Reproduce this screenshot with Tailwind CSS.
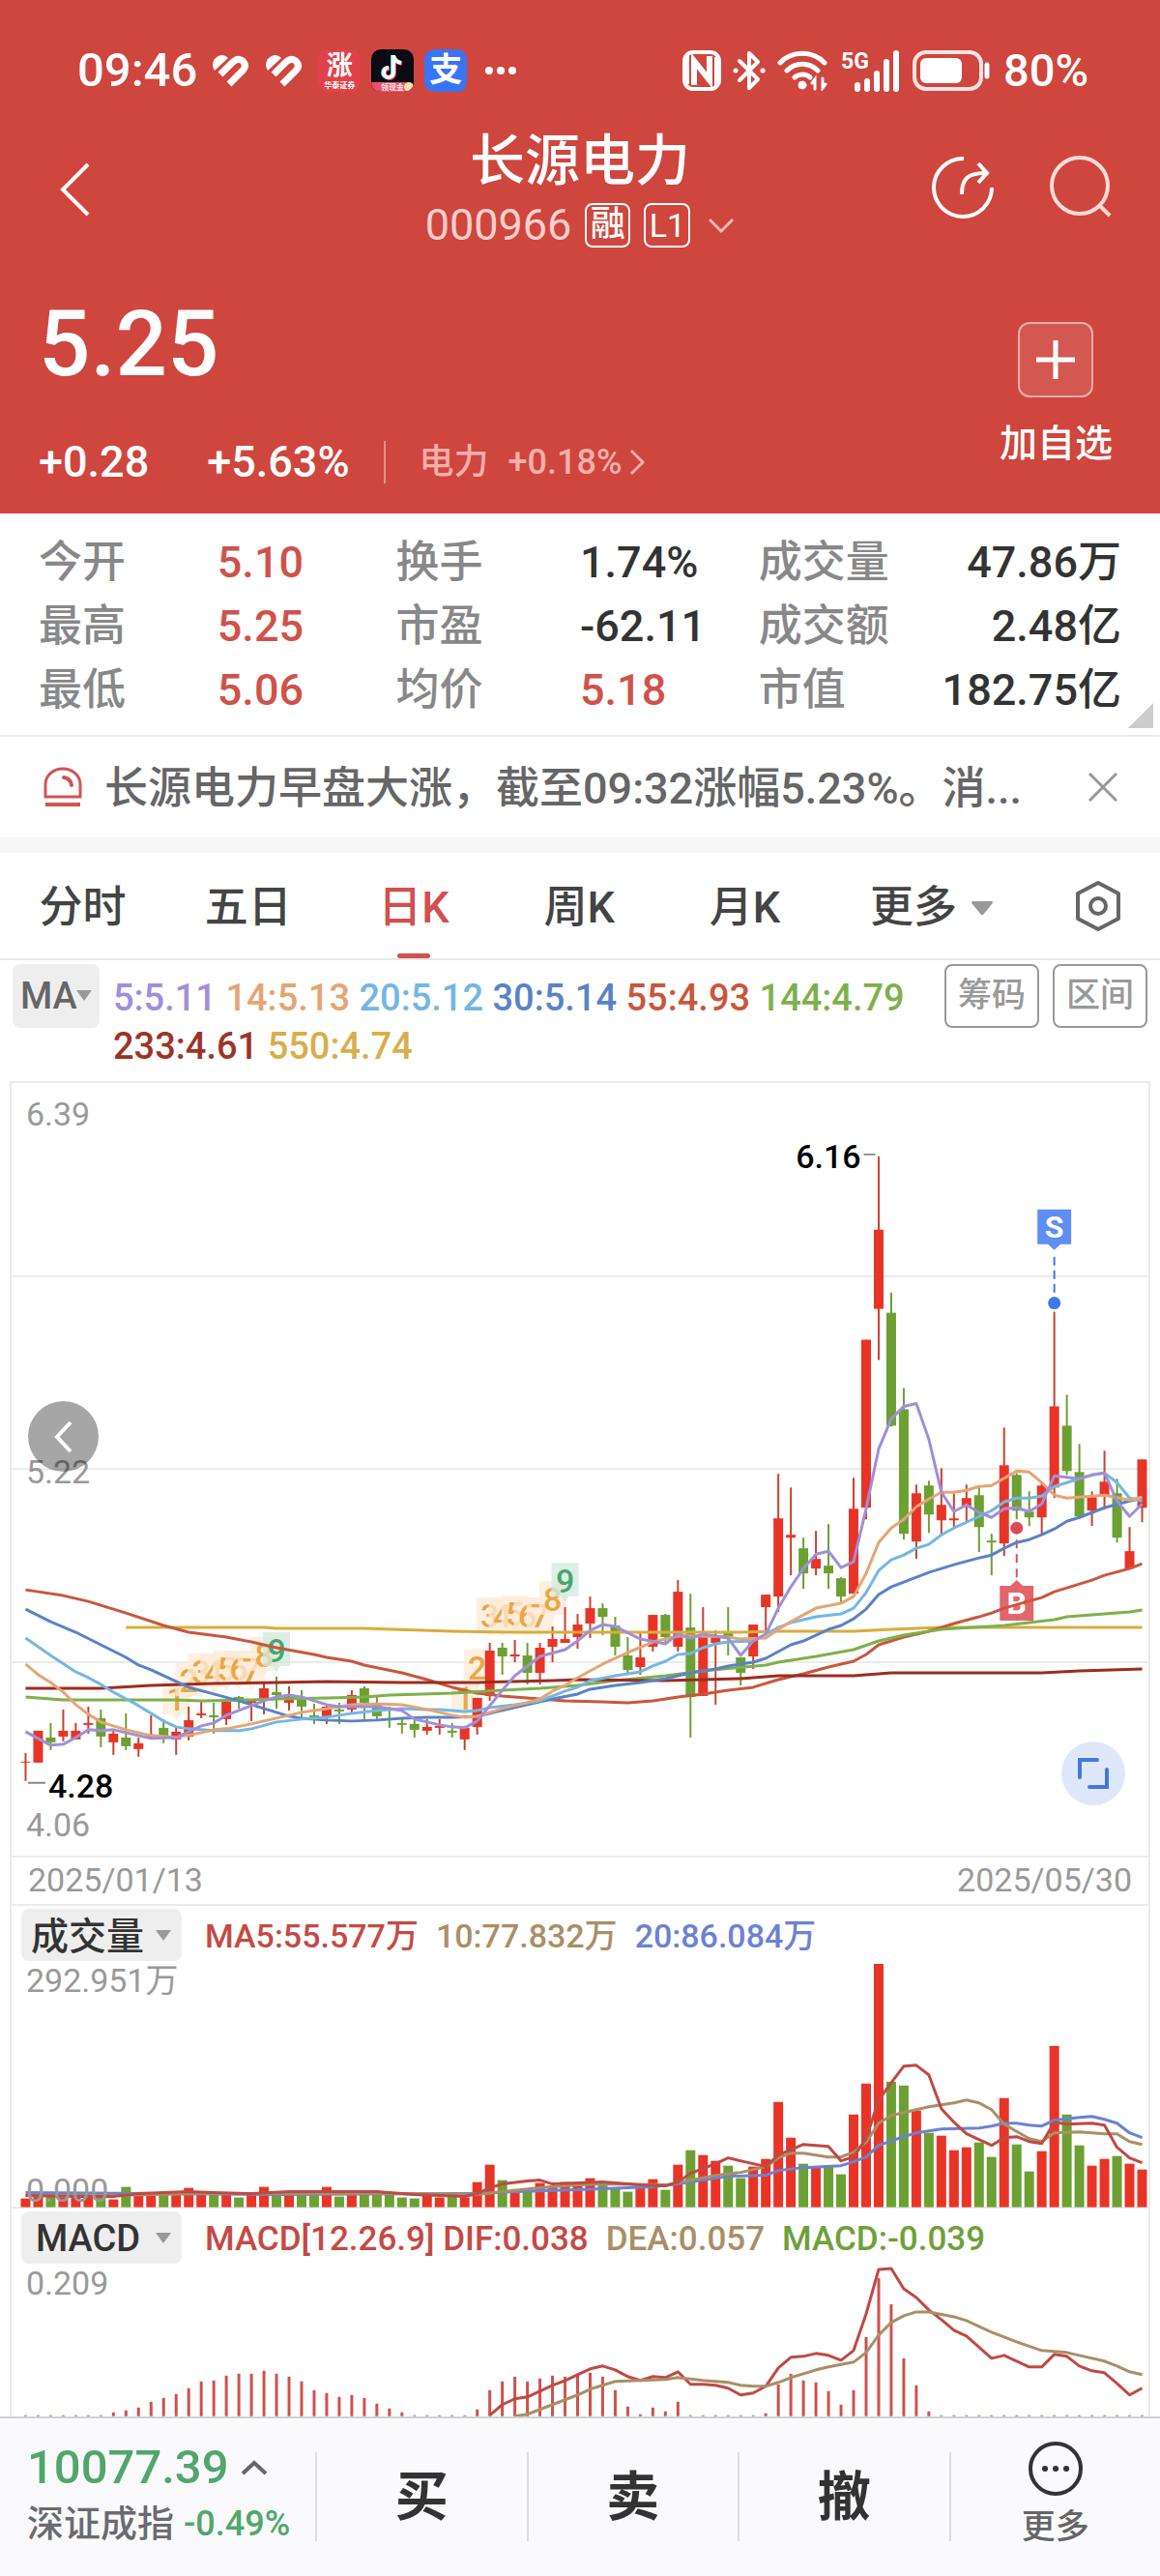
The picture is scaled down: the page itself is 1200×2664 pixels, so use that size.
<!DOCTYPE html>
<html lang="zh-CN">
<head>
    <meta charset="UTF-8">
    <meta name="viewport" content="width=device-width, initial-scale=1.0">
    <title>长源电力 000966</title>
    <script src="https://cdn.jsdelivr.net/npm/@tailwindcss/browser@4"></script>
</head>
<body class="bg-white text-[#333] min-h-screen flex flex-col font-medium font-['Roboto','Noto_Sans_CJK_SC',sans-serif]">

    <header class="bg-[#ce463e] text-white">
        <!-- Status bar -->
        <div class="h-[130px] pt-4 pl-20 pr-[74px] flex items-center justify-between">
            <div class="flex items-center gap-[11px]">
                <span class="text-[49px] leading-[56px] mr-1">09:46</span>
                <svg class="w-[40px] h-[34px] mr-1" viewBox="0 0 40 34"><path d="M3 17C-2 9 4 1 11 1Q14 1 17 4z" fill="#fff"/><path d="M9 21L21 9Q27 3 32 7Q37 12 32 17L18 31" fill="none" stroke="#fff" stroke-width="7"/></svg>
                <svg class="w-[40px] h-[34px] mr-1" viewBox="0 0 40 34"><path d="M3 17C-2 9 4 1 11 1Q14 1 17 4z" fill="#fff"/><path d="M9 21L21 9Q27 3 32 7Q37 12 32 17L18 31" fill="none" stroke="#fff" stroke-width="7"/></svg>
                <span class="w-[44px] h-[44px] rounded-[10px] bg-[#e0414b] flex flex-col items-center font-bold"><span class="text-[27px] leading-[34px]">涨</span><span class="text-[8px] leading-[8px]">华泰证券</span></span>
                <svg class="w-[44px] h-[44px]" viewBox="0 0 44 44">
                    <clipPath id="dy"><rect width="44" height="44" rx="10"/></clipPath>
                    <g clip-path="url(#dy)">
                        <rect width="44" height="44" fill="#0b0b14"/>
                        <path d="M22 6v18a5 5 0 1 1-5-5M22 7c1 4 4 6 8 7" fill="none" stroke="#3be0df" stroke-width="4"/>
                        <path d="M24 7v18a5 5 0 1 1-5-5M24 8c1 4 4 6 8 7" fill="none" stroke="#f23a5e" stroke-width="4"/>
                        <path d="M23 6v18a5 5 0 1 1-5-5M23 7c1 4 4 6 8 7" fill="none" stroke="#fff" stroke-width="4"/>
                        <path d="M0 34H36L44 38V44H0z" fill="#e8506a"/>
                        <circle cx="39" cy="39" r="5" fill="#ffe2b0"/>
                        <text x="10" y="42" font-size="8" fill="#fff">领现金</text>
                    </g>
                </svg>
                <span class="w-[44px] h-[44px] rounded-[10px] bg-[#3775f5] text-[34px] leading-[42px] font-bold text-center">支</span>
                <svg class="w-[32px] h-[8px] ml-2" viewBox="0 0 32 8" fill="#fff"><circle cx="4" cy="4" r="4"/><circle cx="16" cy="4" r="4"/><circle cx="28" cy="4" r="4"/></svg>
            </div>
            <div class="flex items-center gap-3">
                <svg class="w-[40px] h-[42px]" viewBox="0 0 40 42" fill="none"><rect x="2" y="2" width="36" height="38" rx="9" stroke="#fff" stroke-width="4"/><path d="M12 36V11L28 31V6" stroke="#fff" stroke-width="6"/><path d="M5 5v30M35 7v30" stroke="#fff" stroke-width="4"/></svg>
                <svg class="w-[34px] h-[42px]" viewBox="0 0 34 42" fill="none" stroke="#fff" stroke-width="4" stroke-linejoin="round" stroke-linecap="round"><path d="M7 11L26 30L17 39V3L26 12L7 31"/><path d="M3 21h.1M31 21h.1" stroke-width="5"/></svg>
                <svg class="w-[54px] h-[42px]" viewBox="0 0 54 42" fill="none" stroke="#fff" stroke-width="5" stroke-linecap="round"><path d="M3 13C15 0 37 0 49 13M10 21C19 12 33 12 42 21M18 28C23 24 30 24 34 28"/><circle cx="26" cy="36" r="4" fill="#fff" stroke-width="1"/><path d="M39 40V30l-3 4M47 29v10l3-4" stroke-width="3"/></svg>
                <svg class="w-[62px] h-[42px] overflow-visible" viewBox="0 0 62 42"><text x="0" y="19" font-size="23" font-weight="700" fill="#fff">5G</text><path d="M17 40V36M27 40V32M37 40V24M47 40V12M57 40V3" stroke="#fff" stroke-width="6" stroke-linecap="round"/></svg>
                <svg class="w-[82px] h-[42px]" viewBox="0 0 82 42" fill="none"><rect x="2" y="2" width="69" height="38" rx="12" stroke="#fff" stroke-opacity=".85" stroke-width="4"/><rect x="8" y="8" width="43" height="26" rx="6" fill="#fff"/><path d="M77 15v12" stroke="#fff" stroke-width="5" stroke-linecap="round"/></svg>
                <span class="text-[47px] leading-[56px]">80%</span>
            </div>
        </div>

        <!-- Stock name -->
        <div class="grid grid-cols-[1fr_auto_1fr] items-center px-[50px]">
            <button class="w-[36px] h-[60px] ml-[10px]" aria-label="返回">
                <svg class="w-[36px] h-[56px]" viewBox="0 0 36 56" fill="none" stroke="#fff" stroke-width="4"><path d="M31 2L5 28L31 54"/></svg>
            </button>
            <div class="text-center">
                <h1 class="text-[57px] leading-[74px]">长源电力</h1>
                <div class="h-[58px] flex items-center justify-center gap-[14px]">
                    <span class="text-[45px] leading-[48px] font-normal text-[#ffd0cd]">000966</span>
                    <span class="w-[47px] h-[46px] rounded-lg border-2 text-[36px] leading-[40px]">融</span>
                    <span class="w-[48px] h-[46px] rounded-lg border-2 text-[34px] leading-[42px] font-normal">L1</span>
                    <svg class="w-[28px] h-[16px] ml-1" viewBox="0 0 28 16" fill="none" stroke="#f5b5b1" stroke-width="3"><path d="M2 2L14 14L26 2"/></svg>
                </div>
            </div>
            <div class="flex justify-end gap-[52px] pb-1">
                <button aria-label="分享">
                    <svg class="w-[68px] h-[68px]" viewBox="0 0 68 68" fill="none" stroke="#fff" stroke-width="4"><path d="M35 4A30 30 0 1 0 64 34"/><path d="M33 41C33 25 39 19 57 19M50 9L59 19L50 29"/></svg>
                </button>
                <button aria-label="搜索">
                    <svg class="w-[68px] h-[68px]" viewBox="0 0 68 68" fill="none" stroke="#ffdbd8" stroke-width="4"><circle cx="35" cy="32" r="29"/><path d="M56 53L66 63"/></svg>
                </button>
            </div>
        </div>

        <!-- Price -->
        <div class="flex justify-between pl-10 pr-[49px] pb-[29px]">
            <div class="pt-[46px]">
                <div class="text-[94px] leading-[96px]">5.25</div>
                <div class="mt-[50px] h-12 flex items-center text-[45px] leading-[48px]">
                    <span>+0.28</span>
                    <span class="ml-[60px]">+5.63%</span>
                    <span class="w-[2px] h-[44px] bg-white/40 mx-[35px]"></span>
                    <a href="#" class="flex items-center gap-[20px] text-[36px] text-[#f3aeaa]">
                        <span>电力</span><span>+0.18%</span>
                        <svg class="w-[16px] h-[28px] -ml-3" viewBox="0 0 16 28" fill="none" stroke="#f3aeaa" stroke-width="3"><path d="M2 2L14 14L2 26"/></svg>
                    </a>
                </div>
            </div>
            <div class="pt-[71px] flex flex-col items-center">
                <button id="add" class="w-[78px] h-[78px] rounded-xl border-2 border-white/50 bg-white/10 flex items-center justify-center">
                    <svg class="w-[40px] h-[40px]" viewBox="0 0 40 40" stroke="#fff" stroke-width="5"><path d="M20 0V40M0 20H40"/></svg>
                </button>
                <label for="add" class="mt-5 text-[39px] leading-[56px]">加自选</label>
            </div>
        </div>
    </header>

    <!-- Quote figures -->
    <section class="relative px-10 pt-[18px] pb-[13px] border-b-2 border-[#eaeaea]">
        <table class="w-full table-fixed text-[45px] leading-[66px] text-left">
            <colgroup><col class="w-[16.5%]"><col class="w-[16.5%]"><col class="w-[17%]"><col class="w-[16.5%]"><col class="w-[13.5%]"><col class="w-[20%]"></colgroup>
            <tbody>
                <tr>
                    <th class="font-medium text-[#888]">今开</th><td class="text-[#d0524a]">5.10</td>
                    <th class="font-medium text-[#888]">换手</th><td>1.74%</td>
                    <th class="font-medium text-[#888] whitespace-nowrap">成交量</th><td class="text-right">47.86万</td>
                </tr>
                <tr>
                    <th class="font-medium text-[#888]">最高</th><td class="text-[#d0524a]">5.25</td>
                    <th class="font-medium text-[#888]">市盈</th><td>-62.11</td>
                    <th class="font-medium text-[#888] whitespace-nowrap">成交额</th><td class="text-right">2.48亿</td>
                </tr>
                <tr>
                    <th class="font-medium text-[#888]">最低</th><td class="text-[#d0524a]">5.06</td>
                    <th class="font-medium text-[#888]">均价</th><td class="text-[#d0524a]">5.18</td>
                    <th class="font-medium text-[#888]">市值</th><td class="text-right">182.75亿</td>
                </tr>
            </tbody>
        </table>
        <svg class="absolute right-[7px] bottom-[7px] w-[26px] h-[26px]" viewBox="0 0 26 26"><path d="M26 0V26H0z" fill="#ccc"/></svg>
    </section>

    <!-- Alert -->
    <section class="h-[104px] pl-[45px] pr-[44px] flex items-center">
        <svg class="w-[40px] h-[42px] shrink-0" viewBox="0 0 40 42" fill="none" stroke="#d25454" stroke-width="3"><path d="M2 31V18A18 16 0 0 1 38 18V31z"/><path d="M2 39H38" stroke-width="4"/><path d="M21 11Q28 12 29 19" stroke-linecap="round" stroke-width="4"/></svg>
        <p class="ml-[23px] pt-1 text-[45px] leading-[60px] text-[#666] whitespace-nowrap">长源电力早盘大涨，截至09:32涨幅5.23%。消...</p>
        <button class="ml-auto" aria-label="关闭">
            <svg class="w-[30px] h-[30px]" viewBox="0 0 30 30" stroke="#999" stroke-width="3"><path d="M1 1L29 29M29 1L1 29"/></svg>
        </button>
    </section>
    <div class="h-4 bg-[#f7f7f7]"></div>

    <!-- Period tabs -->
    <nav class="h-[111px] border-b-2 border-[#e8e8e8] grid grid-cols-[1fr_1fr_1fr_1fr_1fr_216px_128px] text-[45px] leading-[60px] text-[#444]">
        <button class="pt-1">分时</button>
        <button class="pt-1">五日</button>
        <button class="pt-1 relative text-[#d34f50]">日K<span class="absolute left-1/2 bottom-0 -translate-x-1/2 w-[34px] h-[5px] rounded-full bg-[#d34f50]"></span></button>
        <button class="pt-1">周K</button>
        <button class="pt-1">月K</button>
        <button class="pt-1 flex items-center justify-center gap-[14px]">更多<svg class="w-[24px] h-[16px]" viewBox="0 0 24 16"><path d="M2 1H22Q24 2 22 4L13 15H11L2 4Q0 2 2 1z" fill="#999"/></svg></button>
        <button class="flex items-center justify-center" aria-label="设置">
            <svg class="w-[50px] h-[54px]" viewBox="0 0 50 54" fill="none" stroke="#666" stroke-width="4" stroke-linejoin="round"><path d="M25 3L46 14V40L25 51L4 40V14z"/><circle cx="25" cy="27" r="8"/></svg>
        </button>
    </nav>

    <!-- Moving average legend -->
    <section class="flex items-start px-[13px] pt-1 pb-[11px]">
        <div class="relative">
            <select aria-label="主图指标" class="appearance-none w-[90px] h-[66px] pl-[8px] rounded-lg bg-[#eee] text-[38px] text-[#666]"><option>MA</option></select>
            <svg class="absolute right-[8px] top-[27px] w-[16px] h-[11px] pointer-events-none" viewBox="0 0 16 11"><path d="M0 0H16L8 11z" fill="#999"/></svg>
        </div>
        <p class="flex-1 ml-[14px] mt-[10px] text-[38px] leading-[50px]">
            <span class="text-[#a08fd9]">5:5.11</span>
            <span class="text-[#e5a574]">14:5.13</span>
            <span class="text-[#74b7e4]">20:5.12</span>
            <span class="text-[#5a83c6]">30:5.14</span>
            <span class="text-[#c9573c]">55:4.93</span>
            <span class="text-[#7eb04c]">144:4.79</span>
            <span class="text-[#9b3527]">233:4.61</span>
            <span class="text-[#d9ae4c]">550:4.74</span>
        </p>
        <div class="flex gap-[14px] text-[35px] leading-[62px] text-[#999]">
            <button class="w-[98px] h-[66px] rounded-lg border-2 border-[#999]">筹码</button>
            <button class="w-[98px] h-[66px] rounded-lg border-2 border-[#999]">区间</button>
        </div>
    </section>

    <!-- Charts -->
    <main class="mx-[10px] border-x-2 border-t-2 border-[#ebebeb] text-[34px]">
        <div class="relative">
            <svg id="kline" class="block w-full font-normal" viewBox="0 0 1178 800"></svg>
            <button class="absolute left-[17px] top-[329px] w-[73px] h-[73px] rounded-full bg-black/35 flex items-center justify-center" aria-label="向左">
                <svg class="w-[20px] h-[34px]" viewBox="0 0 20 34" fill="none" stroke="#fff" stroke-width="4"><path d="M17 2L3 17L17 32"/></svg>
            </button>
            <button class="absolute right-[24px] top-[681px] w-[66px] h-[66px] rounded-full bg-[#dfe7fb] flex items-center justify-center" aria-label="全屏">
                <svg class="w-[32px] h-[32px]" viewBox="0 0 32 32" fill="none" stroke="#4478e0" stroke-width="4" stroke-linecap="round"><path d="M2 20V2H20M30 12V30H12"/></svg>
            </button>
        </div>
        <div class="h-[52px] border-y-2 border-[#ebebeb] flex items-center justify-between px-[17px] font-normal text-[#999]">
            <time>2025/01/13</time>
            <time>2025/05/30</time>
        </div>
        <div class="h-[60px] pl-[10px] flex items-center">
            <div class="relative">
                <select aria-label="副图指标一" class="appearance-none block w-[166px] h-[54px] pl-[10px] rounded-lg bg-[#eee] text-[39px]"><option>成交量</option></select>
                <svg class="absolute right-[11px] top-[22px] w-[16px] h-[11px] pointer-events-none" viewBox="0 0 16 11"><path d="M0 0H16L8 11z" fill="#999"/></svg>
            </div>
            <p class="ml-[24px] pt-1 flex gap-[18px]">
                <span class="text-[#c44a44]">MA5:55.577万</span>
                <span class="text-[#a98f66]">10:77.832万</span>
                <span class="text-[#6c82d0]">20:86.084万</span>
            </p>
        </div>
        <svg id="volume" class="block w-full font-normal overflow-visible" viewBox="0 60 1178 252"></svg>
        <div class="h-[62px] border-t-2 border-[#ebebeb] pl-[10px] flex items-center">
            <div class="relative">
                <select aria-label="副图指标二" class="appearance-none block w-[166px] h-[54px] pl-[15px] rounded-lg bg-[#eee] text-[38px]"><option>MACD</option></select>
                <svg class="absolute right-[11px] top-[22px] w-[16px] h-[11px] pointer-events-none" viewBox="0 0 16 11"><path d="M0 0H16L8 11z" fill="#999"/></svg>
            </div>
            <p class="ml-[24px] pt-1 flex gap-[18px] text-[35px]">
                <span class="text-[#c44a44]">MACD[12.26.9] DIF:0.038</span>
                <span class="text-[#a98f66]">DEA:0.057</span>
                <span class="text-[#6fa03a]">MACD:-0.039</span>
            </p>
        </div>
        <svg id="macd" class="block w-full font-normal" viewBox="0 60 1178 155"></svg>
    </main>

    <!-- Trade bar -->
    <footer class="flex-1 min-h-[165px] bg-[#fafafc] border-t-2 border-[#d2d2d4] flex items-center">
        <a href="#" class="block w-[326px] pl-[28px] pb-1">
            <div class="flex items-center gap-[12px] text-[49px] leading-[60px] text-[#52a66c]">10077.39
                <svg class="w-[28px] h-[16px]" viewBox="0 0 28 16" fill="none" stroke="#666" stroke-width="4"><path d="M2 14L14 3L26 14"/></svg>
            </div>
            <div class="flex items-center gap-[10px] leading-[56px]">
                <span class="text-[38px] text-[#6a6a70]">深证成指</span>
                <span class="text-[36px] text-[#52a66c]">-0.49%</span>
            </div>
        </a>
        <div class="flex-1 grid grid-cols-4 grid-rows-[92px]">
            <button class="border-l-2 border-[#dcdcde] text-[55px] leading-[84px] font-bold">买</button>
            <button class="border-l-2 border-[#dcdcde] text-[55px] leading-[84px] font-bold">卖</button>
            <button class="border-l-2 border-[#dcdcde] text-[55px] leading-[84px] font-bold">撤</button>
            <button class="border-l-2 border-[#dcdcde] flex flex-col items-center justify-center text-[35px] leading-[50px] text-[#666]">
                <svg class="w-[56px] h-[56px] mb-2 shrink-0" viewBox="0 0 56 56" fill="none" stroke="#333" stroke-width="4"><circle cx="28" cy="28" r="26"/><path d="M17 28h.1M28 28h.1M39 28h.1" stroke-width="6" stroke-linecap="round"/></svg>
                更多
            </button>
        </div>
    </footer>

    <script>
        const RED = '#e83427';
        const GREEN = '#6ca033';

        // One row a day: body top, body bottom, high, low, 1 = up / 0 = down, volume
        const days = [
            [703,704,694,723,1,9],[671,704,671,704,1,11],[678,683,663,691,0,11],[671,677,649,682,1,10],[671,680,663,680,1,10],
            [663,665,646,674,1,11],[658,677,649,688,0,11],[674,683,671,696,1,8],[678,687,653,691,0,21],[684,690,678,698,1,12],
            [675,677,655,679,1,12],[668,677,659,684,0,13],[672,680,668,696,1,13],[660,677,646,681,1,20],[653,655,641,658,1,15],
            [655,657,642,674,0,13],[641,659,641,665,1,14],[636,640,635,648,0,10],[640,642,639,661,1,13],[627,637,622,654,1,21],
            [631,634,615,648,0,14],[636,642,625,650,1,14],[636,646,629,657,0,14],[655,657,643,664,0,14],[646,656,644,664,1,21],
            [649,651,642,664,0,11],[634,649,629,653,1,15],[627,642,625,659,0,16],[643,656,636,659,0,15],[647,649,646,668,0,13],
            [663,665,659,674,0,10],[664,670,660,678,0,9],[667,671,659,675,1,12],[666,668,659,675,1,10],[671,673,663,678,0,11],
            [668,680,666,691,1,10],[637,667,637,675,1,26],[588,635,580,640,1,44],[585,594,580,613,0,28],[592,594,577,600,1,17],
            [593,611,580,623,0,18],[585,611,580,623,1,25],[576,584,563,600,1,22],[576,580,543,580,1,26],[561,574,550,586,1,25],
            [544,560,532,575,1,30],[544,553,539,572,0,25],[562,584,553,593,0,19],[593,608,574,611,0,16],[595,605,569,613,1,22],
            [551,584,551,589,1,29],[551,574,550,581,0,18],[527,584,515,589,1,44],[564,636,529,678,0,59],[572,635,543,635,1,54],
            [574,580,567,644,1,48],[569,574,543,593,0,43],[595,611,595,624,0,30],[561,594,561,607,1,42],[530,543,530,569,1,50],
            [451,532,405,548,1,109],[468,471,419,510,1,72],[482,508,471,524,0,45],[493,503,464,510,1,42],[500,508,457,524,0,43],
            [513,532,512,538,0,34],[441,529,409,529,1,96],[266,440,266,452,1,128],[152,234,76,287,1,252],[238,355,217,356,0,130],
            [338,467,316,473,0,126],[425,475,416,493,1,100],[417,447,412,466,0,77],[437,453,399,467,1,74],[451,453,425,460,1,59],
            [430,439,416,454,1,62],[427,460,419,486,0,67],[474,476,467,510,0,52],[396,477,357,490,1,113],[406,443,404,452,0,65],
            [444,450,423,459,0,37],[417,450,413,467,1,58],[335,419,237,430,1,167],[355,402,323,406,0,96],[403,449,374,450,0,64],
            [429,443,423,459,1,43],[413,428,381,442,1,50],[425,471,410,476,0,53],[485,503,460,503,1,45],[390,440,390,455,1,39],
        ];

        // Lines are "day,y" pairs
        const priceLines = [
            ['#d9ad3c', '8,564 19,564 20,565 27,565 34,568 39,569 57,569 60,568 66,568 69,566 73,564 89,564'],
            ['#c9573c', '0,525 3,531 5,537 8,549 11,562 13,569 16,574 18,579 20,585 23,592 24,595 26,599 27,603 30,611 32,618 34,626 36,632 38,635 40,637 43,640 46,641 48,642 50,640 52,636 54,633 56,629 58,626 60,618 62,612 64,605 66,599 67,592 68,582 70,574 72,568 74,560 76,553 77,549 78,544 81,533 82,527 85,515 86,510 88,503 89,498'],
            ['#7eb04c', '0,636 3,639 12,639 14,640 18,639 20,638 24,637 27,636 29,634 34,632 38,629 41,627 44,624 47,619 51,614 54,609 59,603 60,600 63,594 66,587 68,578 70,572 73,566 78,562 82,556 83,553 88,548 89,546'],
            ['#9b2d20', '0,627 6,627 10,624 15,622 20,621 24,620 30,621 36,621 42,619 44,618 51,619 57,617 60,614 66,614 69,611 81,611 84,609 89,607'],
            ['#5a83c6', '0,545 2,558 4,569 6,582 8,595 9,603 10,608 11,614 13,626 15,633 17,640 19,648 20,652 21,656 22,658 24,660 26,661 28,660 30,658 32,657 34,657 36,656 38,650 40,644 42,638 44,633 45,628 47,624 49,621 51,617 53,611 55,607 56,604 58,600 59,596 61,582 62,578 64,566 65,562 66,555 67,545 68,530 69,522 70,517 72,507 74,499 76,492 77,489 78,482 79,476 80,473 81,468 82,462 83,454 84,450 86,440 88,433 89,430'],
            ['#74b7e4', '0,575 1,584 2,593 4,610 5,616 6,623 7,631 9,645 11,661 12,667 13,669 15,671 17,671 18,669 20,662 22,659 24,657 26,653 28,650 30,648 32,649 33,649 35,651 36,650 37,647 39,644 41,640 43,630 44,626 45,619 47,614 49,610 50,604 51,599 52,592 53,591 54,585 55,581 56,579 58,578 59,571 60,564 61,559 63,553 65,550 66,544 67,528 68,505 69,494 70,489 71,482 72,478 73,468 74,461 76,449 77,443 78,434 79,430 80,430 81,428 82,418 83,414 85,406 86,404 87,414 88,430 89,433'],
            ['#e5a574', '0,602 1,613 2,621 3,631 4,644 5,654 6,662 8,670 10,676 12,678 14,673 15,670 16,669 18,664 20,658 22,652 24,648 26,644 28,643 30,644 32,649 34,655 35,657 36,656 37,652 38,648 40,642 41,638 42,630 43,624 44,616 46,602 48,590 50,579 52,573 54,573 56,574 57,576 59,575 60,566 61,558 62,551 63,544 65,539 66,532 67,508 68,476 69,461 70,452 71,439 72,431 73,424 74,424 75,422 76,418 77,417 79,402 80,403 81,414 82,427 83,430 84,429 86,427 88,432 89,429'],
            ['#a08fd9', '0,672 2,686 3,685 4,678 5,670 6,671 7,670 8,673 10,679 12,678 13,672 14,666 15,663 16,655 18,645 19,640 20,636 21,634 22,636 23,640 24,644 25,646 28,646 29,648 30,650 31,659 32,662 33,665 34,667 35,668 36,661 37,645 38,629 39,614 40,604 41,594 43,587 44,578 45,567 46,561 47,563 49,576 51,581 52,571 53,575 54,571 56,575 57,593 58,578 59,571 60,544 61,522 62,503 63,488 64,485 65,502 66,496 67,441 68,379 69,348 70,335 71,332 72,369 73,424 74,444 75,437 76,445 77,450 78,441 79,440 80,444 81,436 82,407 84,410 85,406 86,404 87,433 88,449 89,436'],
        ];
        const volumeLines = [
            ['#6c82d0', '0,297 10,298 20,299 34,298 36,298 39,296 44,294 50,291 52,288 53,286 56,280 59,279 60,274 62,271 65,269 66,265 67,260 68,248 70,239 71,235 73,231 76,230 77,228 78,225 79,225 80,227 81,228 82,222 84,219 85,218 86,221 87,225 88,235 89,240'],
            ['#a98f66', '0,300 7,300 10,299 14,298 20,298 30,298 36,299 38,296 41,292 44,289 46,288 51,289 53,284 55,279 57,276 59,270 60,261 61,256 62,256 64,260 65,260 66,255 67,245 68,225 69,217 72,208 74,204 75,201 76,204 77,211 78,226 80,241 81,244 82,235 84,234 86,236 87,236 88,244 89,247'],
            ['#bf4a43', '0,300 4,301 7,301 9,298 11,297 13,296 15,297 18,298 21,296 28,296 31,299 35,301 36,298 37,292 38,288 40,285 41,284 42,288 44,287 46,286 49,289 51,290 52,286 53,277 55,267 56,261 59,270 60,258 62,247 64,249 65,264 66,260 67,241 68,201 69,183 70,166 71,165 72,175 73,210 74,224 75,236 77,248 78,240 79,239 80,244 81,246 82,224 83,226 85,225 86,227 87,250 88,261 89,266'],
        ];
        const macdLines = [
            ['#bf4a43', '37,214 38,203 39,197 40,195 41,189 42,183 43,178 44,172 45,166 46,163 47,167 48,174 49,178 50,174 51,175 52,169 53,182 54,182 55,183 56,186 57,193 58,191 59,184 60,165 61,154 62,153 63,150 64,152 65,157 66,147 67,109 68,63 69,62 70,83 71,92 72,105 73,115 74,126 75,132 77,155 78,152 80,164 81,164 82,151 83,153 84,163 85,168 86,170 87,181 88,193 89,186'],
            ['#a98f66', '39,215 40,213 42,203 44,193 45,187 46,183 47,179 49,178 51,177 52,175 54,178 56,180 57,183 58,184 59,184 60,180 61,175 62,171 63,167 64,164 66,159 67,149 68,131 69,118 70,111 71,107 72,107 74,112 75,116 77,128 79,138 81,147 83,149 84,152 86,158 87,163 88,169 89,172'],
        ];

        // Histogram height above the fold, 0 = below the axis
        const histogram = [
            0,0,0,0,0,0,0,4,6,9,15,19,23,29,36,37,42,44,44,47,44,41,36,27,24,20,22,19,13,8,
            4,0,0,0,0,0,7,27,36,41,36,39,42,41,44,45,41,27,10,2,9,5,15,0,0,0,0,0,0,3,
            33,44,37,35,26,12,27,82,143,116,60,32,5,0,0,0,0,0,0,0,0,0,0,0,0,0,0,0,0,0,
        ];

        // Nine-count marks: day, digit, baseline
        const marks = [
            [12,1,650],[13,2,631],[14,3,622],[15,4,622],[16,5,619],[17,6,619],[18,7,620],[19,8,605],[20,9,600],
            [35,1,649],[36,2,618],[37,3,564],[38,4,564],[39,5,562],[40,6,564],[41,7,564],[42,8,547],[43,9,528],
        ];

        const dayX = i => 14.5 + 13 * i;

        function drawLines(lines) {
            return lines.map(([color, points]) => {
                const scaled = points.split(' ').map(p => {
                    const [i, y] = p.split(',');
                    return dayX(+i) + ',' + y;
                }).join(' ');
                return `<polyline points="${scaled}" fill="none" stroke="${color}" stroke-width="3" stroke-linejoin="round"/>`;
            }).join('');
        }

        function drawMark([i, digit, y]) {
            const x = dayX(i);
            const box = digit === 9 ? '#cfeadb' : '#fdebd7';
            const ink = digit === 9 ? '#4aa56c' : '#e8a748';
            return `<path d="M${x - 14} ${y - 31}h28v35h-10l-4 6l-4 -6h-10z" fill="${box}" fill-opacity=".75"/>
                <text x="${x}" y="${y}" font-size="34" font-weight="500" text-anchor="middle" fill="${ink}">${digit}</text>`;
        }

        // Price pane
        let svg = '';
        [200, 400, 600].forEach(y => {
            svg += `<path d="M0 ${y}H1178" stroke="#ebebeb" stroke-width="2"/>`;
        });
        svg += `<text x="15" y="44" fill="#999">6.39</text><text x="15" y="415" fill="#999">5.22</text><text x="15" y="780" fill="#999">4.06</text>`;
        svg += marks.map(drawMark).join('');
        days.forEach(([top, bottom, high, low, up], i) => {
            const x = dayX(i);
            const color = up ? RED : GREEN;
            svg += `<path d="M${x} ${high}V${low}" stroke="${up ? '#c9412f' : '#6ca033'}" stroke-width="2"/>`;
            svg += `<rect x="${x - 5}" y="${top}" width="10" height="${bottom - top}" fill="${color}"/>`;
        });
        svg += `<path d="M1041.5 473V515" stroke="#dc4d52" stroke-width="2" stroke-dasharray="9 6"/>
            <circle cx="1041.5" cy="461" r="6.5" fill="#dc4d52"/>
            <path d="M1024 521h11l6.5 -6l6.5 6h11v36h-35z" fill="#e2666b"/>
            <text x="1041.5" y="550" font-size="32" font-weight="700" text-anchor="middle" fill="#fff">B</text>`;
        svg += drawLines(priceLines);
        svg += `<path d="M1080.5 180V222" stroke="#3f77ee" stroke-width="2" stroke-dasharray="9 5"/>
            <circle cx="1080.5" cy="228" r="6.5" fill="#3f77ee"/>
            <path d="M1063 131h35v36h-11l-6.5 6l-6.5 -6h-11z" fill="#5f8ef3"/>
            <text x="1080.5" y="160" font-size="32" font-weight="700" text-anchor="middle" fill="#fff">S</text>`;
        svg += `<path d="M883 74h12M17 725h18" stroke="#888" stroke-width="2"/>
            <text x="880" y="88" text-anchor="end" font-weight="500" fill="#000">6.16</text>
            <text x="38" y="740" font-weight="500" fill="#000">4.28</text>`;
        document.getElementById('kline').innerHTML = svg;

        // Volume pane
        svg = '<text x="15" y="89" fill="#999">292.951万</text>';
        days.forEach(([, , , , up, volume], i) => {
            svg += `<rect x="${dayX(i) - 5}" y="${312 - volume}" width="10" height="${volume}" fill="${up ? RED : GREEN}"/>`;
        });
        svg += drawLines(volumeLines) + '<text x="15" y="306" fill="#999">0.000</text>';
        document.getElementById('volume').innerHTML = svg;

        // MACD pane
        svg = '<text x="15" y="89" fill="#999">0.209</text>';
        histogram.forEach((h, i) => {
            svg += `<path d="M${dayX(i)} 215v-${h || 1}" stroke="${h ? '#d0504e' : '#6ca033'}" stroke-width="3"/>`;
        });
        svg += drawLines(macdLines);
        document.getElementById('macd').innerHTML = svg;
    </script>
</body>
</html>
